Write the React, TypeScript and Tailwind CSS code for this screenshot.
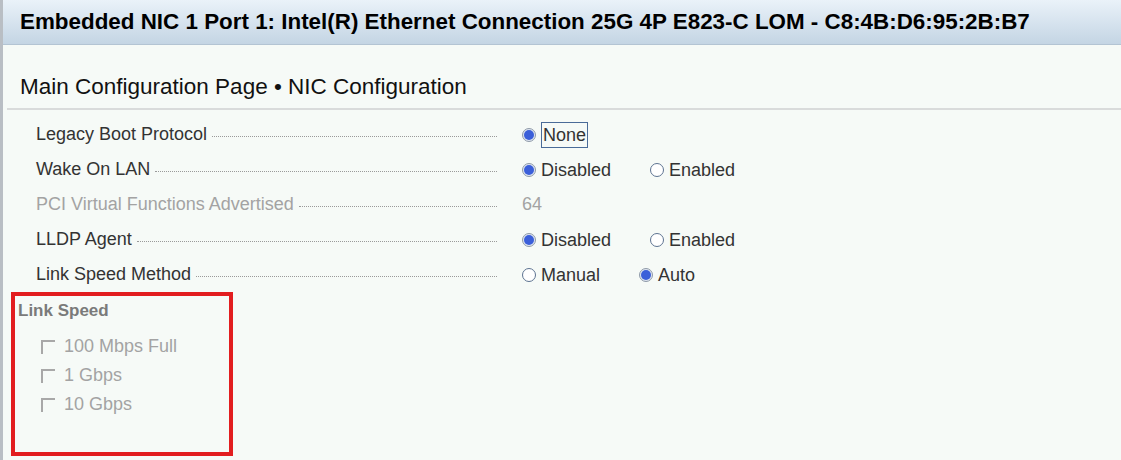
const rows = [
  { label: 'Legacy Boot Protocol', kind: 'radio', options: [{ text: 'None', checked: true, focus: true }] },
  {
    label: 'Wake On LAN',
    kind: 'radio',
    options: [
      { text: 'Disabled', checked: true },
      { text: 'Enabled', checked: false },
    ],
  },
  { label: 'PCI Virtual Functions Advertised', kind: 'text', value: '64', disabled: true },
  {
    label: 'LLDP Agent',
    kind: 'radio',
    options: [
      { text: 'Disabled', checked: true },
      { text: 'Enabled', checked: false },
    ],
  },
  {
    label: 'Link Speed Method',
    kind: 'radio',
    options: [
      { text: 'Manual', checked: false },
      { text: 'Auto', checked: true },
    ],
  },
]

const speeds = ['100 Mbps Full', '1 Gbps', '10 Gbps']

function Radio({ checked }: { checked: boolean }) {
  return checked ? (
    <span className="flex h-[14px] w-[14px] items-center justify-center rounded-full border border-[#8f9aa8] bg-[#dfe6f2]">
      <span className="h-[10px] w-[10px] rounded-full bg-[#3b5fd9]" />
    </span>
  ) : (
    <span className="h-[14px] w-[14px] rounded-full border border-[#5d7391] bg-white" />
  )
}

export default function App() {
  return (
    <div
      className="h-[460px] w-[1121px] overflow-hidden border-l-[3px] border-[#b9bec4] bg-[#f6faf7] text-[#333]"
      style={{ fontFamily: '"Liberation Sans", Arial, sans-serif' }}
    >
      <header className="flex h-[45px] items-center border-b border-[#b3c4d3] bg-gradient-to-b from-[#eaf2f9] to-[#c4d5e4] pl-[17px]">
        <h1 className="text-[22.4px] font-bold text-black">
          Embedded NIC 1 Port 1: Intel(R) Ethernet Connection 25G 4P E823-C LOM - C8:4B:D6:95:2B:B7
        </h1>
      </header>

      <div className="ml-[4px] flex h-[65px] items-end border-b-2 border-[#d9dbdb] pb-[9px] pl-[13px]">
        <h2 className="text-[22.5px] leading-[24px] text-[#111]">Main Configuration Page • NIC Configuration</h2>
      </div>

      <div className="mt-[7px]">
        {rows.map((row) => (
          <div key={row.label} className="flex h-[35px] items-center">
            <div className="flex w-[494px] items-center pl-[33px]">
              <span className={`text-[18px] whitespace-nowrap ${row.disabled ? 'text-[#a3a3a3]' : 'text-[#333]'}`}>
                {row.label}
              </span>
              <span className="ml-[5px] mt-[3px] flex-1 border-t border-dotted border-[#9a9a9a]" />
            </div>
            <div className="ml-[25px] flex items-center gap-[39px]">
              {row.kind === 'text' ? (
                <span className="text-[18px] text-[#a3a3a3]">{row.value}</span>
              ) : (
                row.options?.map((opt) => (
                  <div key={opt.text} className="flex items-center gap-[5px]">
                    <Radio checked={opt.checked} />
                    <span
                      className={`text-[18px] leading-[24px] ${
                        opt.focus ? 'border border-[#4a6b98] px-px' : ''
                      }`}
                    >
                      {opt.text}
                    </span>
                  </div>
                ))
              )}
            </div>
          </div>
        ))}
      </div>

      <section className="ml-[8px] h-[164px] w-[222px] border-[4px] border-[#e21d1f] pl-[3px] pt-[4px]">
        <h3 className="text-[17px] font-bold leading-[22px] text-[#7a7a7a]">Link Speed</h3>
        <div className="mt-[10px] pl-[23px]">
          {speeds.map((s) => (
            <label key={s} className="flex h-[29px] items-center gap-[9px]">
              <span className="h-[14px] w-[14px] shrink-0 border-l-2 border-t-2 border-[#a8a8a8]" />
              <span className="text-[18px] text-[#a3a3a3]">{s}</span>
            </label>
          ))}
        </div>
      </section>
    </div>
  )
}
